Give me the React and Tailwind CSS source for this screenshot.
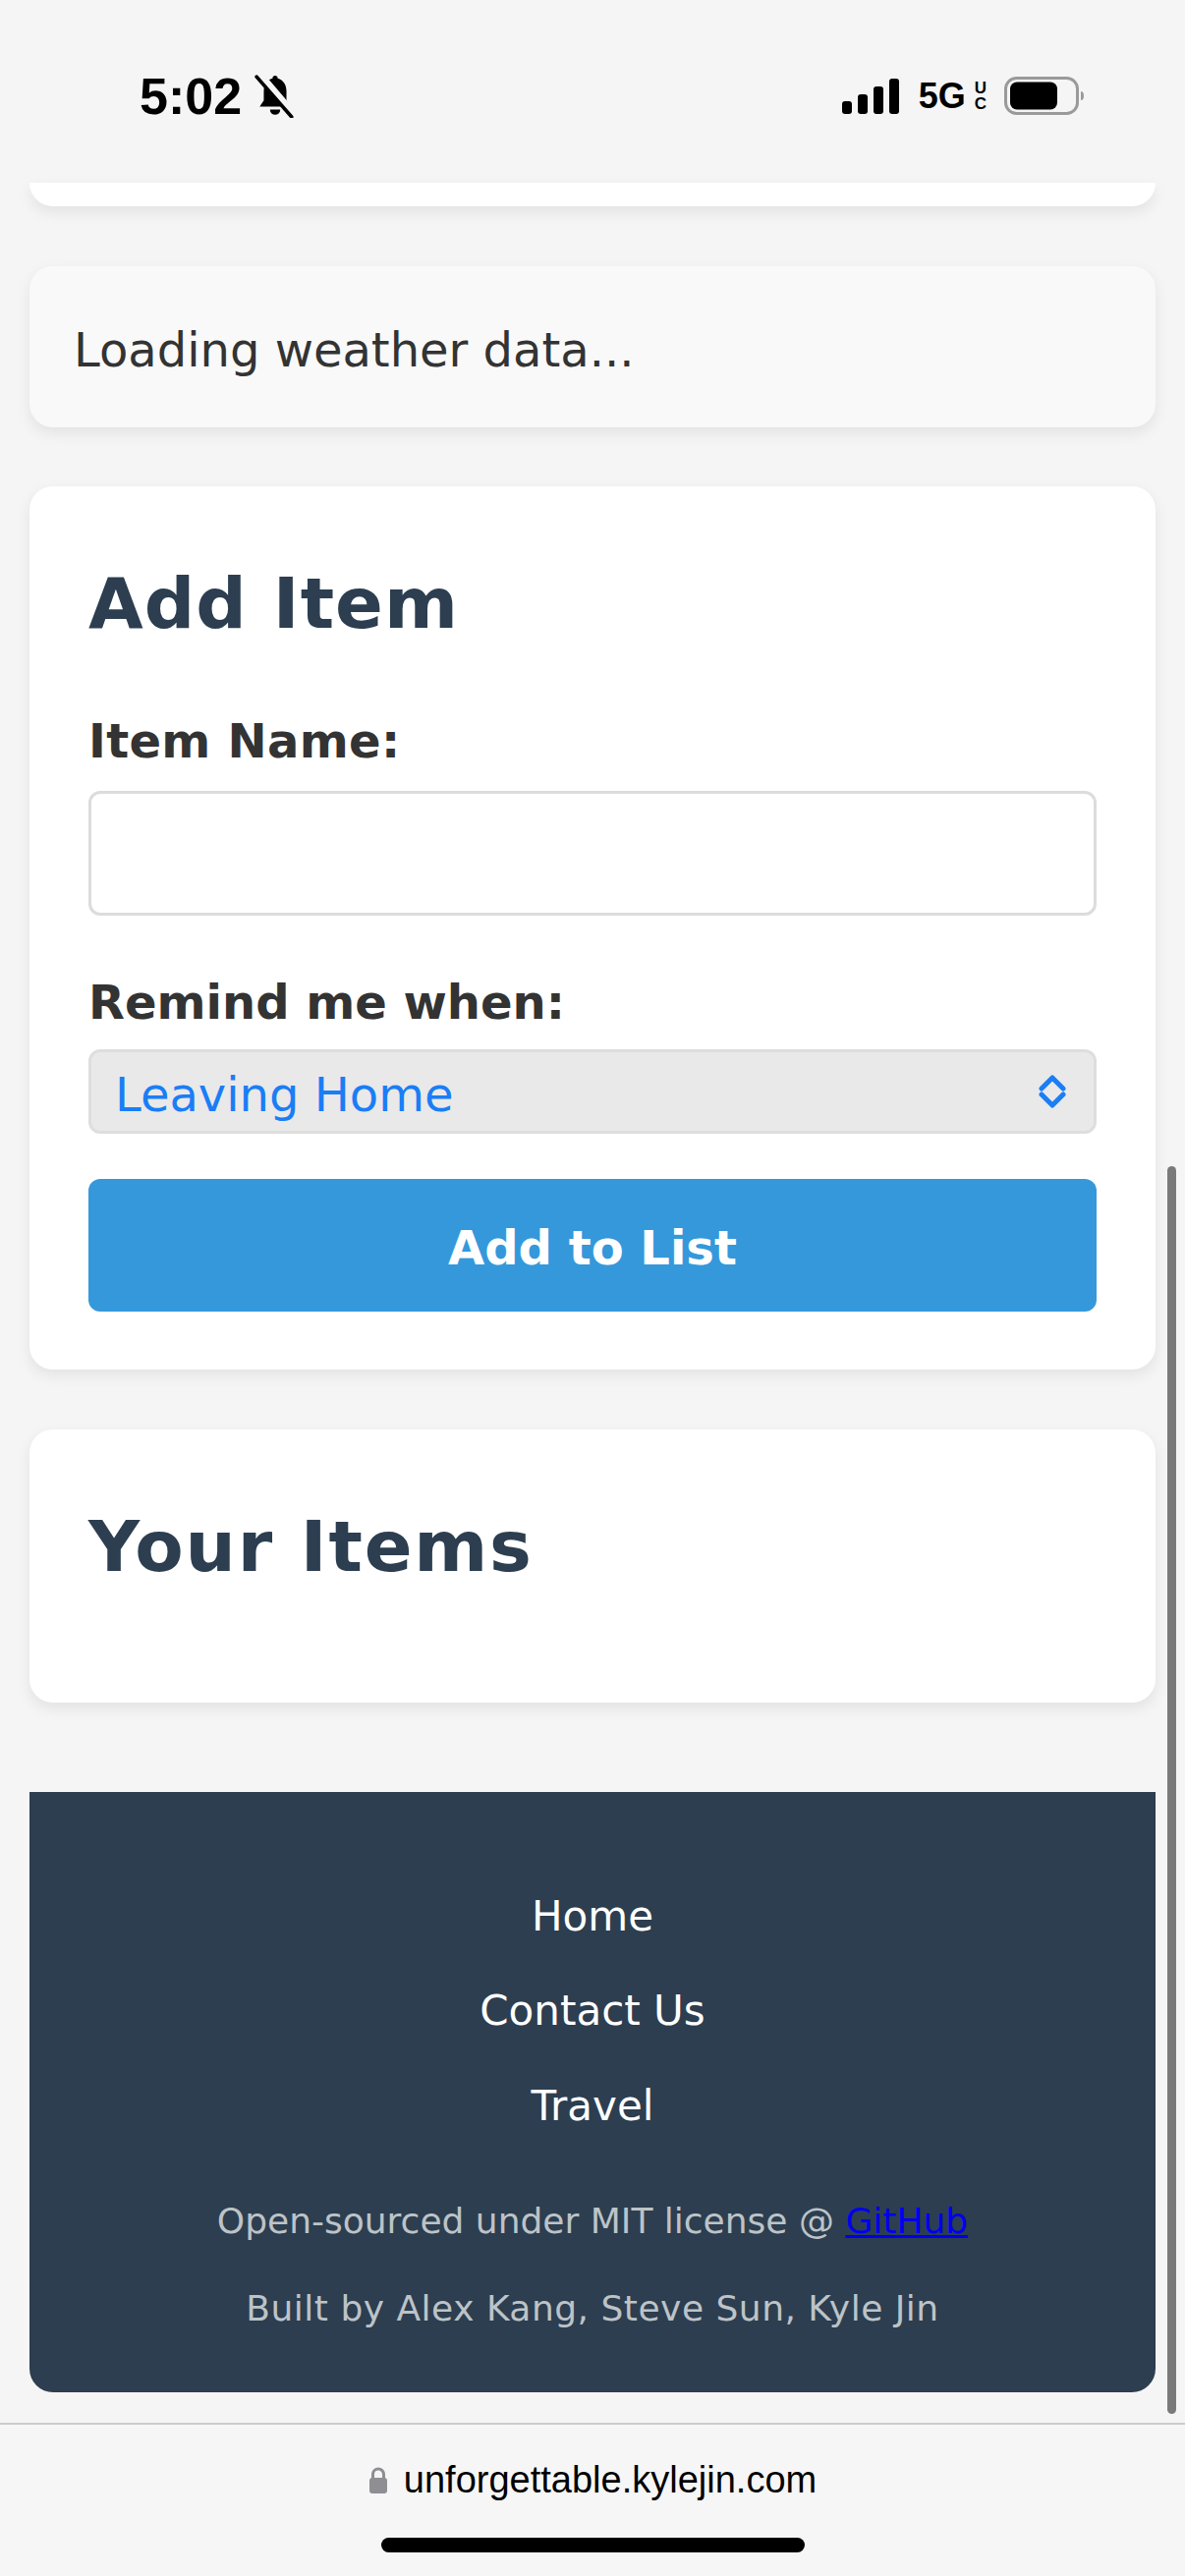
import React from "react";

const BellOff = () => (
  <svg width="42" height="44" viewBox="0 0 40 42" xmlns="http://www.w3.org/2000/svg">
    <path d="M20 1 C18.5 1 17.5 2 17.5 3.5 C12 5 9 10 9 16 L9 25 L5 31 L35 31 L31 25 L31 16 C31 10 28 5 22.5 3.5 C22.5 2 21.5 1 20 1 Z" fill="#000" />
    <path d="M15 34 A5 5 0 0 0 25 34 Z" fill="#000" />
    <line x1="6" y1="0" x2="40" y2="40" stroke="#f5f5f5" strokeWidth="6" />
    <line x1="2" y1="2" x2="36" y2="41" stroke="#000" strokeWidth="3.5" strokeLinecap="round" />
  </svg>
);

const Signal = () => (
  <svg width="58" height="36" viewBox="0 0 58 36" xmlns="http://www.w3.org/2000/svg">
    <rect x="0" y="23" width="10" height="13" rx="3" fill="#000" />
    <rect x="16" y="16" width="10" height="20" rx="3" fill="#000" />
    <rect x="32" y="8" width="10" height="28" rx="3" fill="#000" />
    <rect x="48" y="0" width="10" height="36" rx="3" fill="#000" />
  </svg>
);

const Battery = () => (
  <svg width="82" height="40" viewBox="0 0 82 40" xmlns="http://www.w3.org/2000/svg">
    <rect x="1.5" y="1.5" width="73" height="36" rx="11" fill="none" stroke="#9a9a9a" strokeWidth="3" />
    <rect x="6" y="5.5" width="48" height="28" rx="7" fill="#000" />
    <path d="M78 15 Q81 15 81 19.5 Q81 24 78 24 Z" fill="#9a9a9a" />
  </svg>
);

const Chevrons = () => (
  <svg width="28" height="36" viewBox="0 0 28 36" xmlns="http://www.w3.org/2000/svg">
    <path d="M3 15 L14 4 L25 15" fill="none" stroke="#1a7ef5" strokeWidth="5" strokeLinecap="round" strokeLinejoin="round" />
    <path d="M3 21 L14 32 L25 21" fill="none" stroke="#1a7ef5" strokeWidth="5" strokeLinecap="round" strokeLinejoin="round" />
  </svg>
);

const Lock = () => (
  <svg width="20" height="27" viewBox="0 0 20 27" xmlns="http://www.w3.org/2000/svg">
    <path d="M4.5 12 L4.5 7.5 A5.5 5.5 0 0 1 15.5 7.5 L15.5 12" fill="none" stroke="#8e8e93" strokeWidth="3" />
    <rect x="1" y="11" width="18" height="16" rx="3" fill="#8e8e93" />
  </svg>
);

export default function App() {
  return (
    <div className="relative w-full min-h-[2622px] overflow-hidden bg-[#f5f5f5] flex flex-col" style={{ fontFamily: '"DejaVu Sans", Verdana, sans-serif' }}>
      {/* Status bar */}
      <div className="h-[186px] flex flex-col">
        <div className="mt-[70px] h-[56px] flex items-center justify-between pl-[142px] pr-[102px]" style={{ fontFamily: '"Liberation Sans", Arial, sans-serif' }}>
          <div className="flex items-center gap-[13px]">
            <span className="text-[52px] leading-[52px] font-bold text-black">5:02</span>
            <BellOff />
          </div>
          <div className="flex items-center">
            <Signal />
            <span className="ml-[20px] text-[36px] leading-[40px] font-bold text-black">5G</span>
            <span className="ml-[9px] flex flex-col items-center text-[17px] leading-[16px] font-bold text-black">
              <span>U</span>
              <span>C</span>
            </span>
            <span className="ml-[18px] flex items-center">
              <Battery />
            </span>
          </div>
        </div>
      </div>

      <main className="px-[30px] flex flex-col">
        {/* previous card peeking out */}
        <div className="h-[24px] bg-white rounded-b-[24px] shadow-[0_6px_15px_rgba(0,0,0,0.08)]" />

        {/* Weather */}
        <div className="mt-[61px] h-[164px] bg-[#f9f9f9] rounded-[24px] pl-[45px] pt-[6px] flex items-center shadow-[0_6px_15px_rgba(0,0,0,0.08)]">
          <p className="text-[48px] leading-[56px] text-[#333]">Loading weather data...</p>
        </div>

        {/* Add Item */}
        <section className="mt-[60px] bg-white rounded-[24px] px-[60px] pt-[77px] pb-[59px] shadow-[0_6px_15px_rgba(0,0,0,0.08)] flex flex-col">
          <h2 className="text-[72px] leading-[84px] font-bold tracking-[1px] text-[#2c3e50]">Add Item</h2>
          <label className="mt-[70px] text-[48px] leading-[56px] font-bold tracking-[0.3px] text-[#333]">Item Name:</label>
          <input type="text" className="mt-[23px] h-[127px] w-full border-[3px] border-[#dcdcdc] rounded-[12px] bg-white px-[24px] text-[48px] outline-none" />
          <label className="mt-[60px] text-[48px] leading-[56px] font-bold text-[#333]">Remind me when:</label>
          <div className="mt-[20px] h-[86px] border-[3px] border-[#dedede] bg-[#e9e9ea] rounded-[12px] pl-[24px] pr-[28px] flex items-center justify-between">
            <span className="pt-[6px] text-[48px] leading-[56px] text-[#1a7ef5]">Leaving Home</span>
            <Chevrons />
          </div>
          <button className="mt-[46px] h-[135px] w-full bg-[#3498db] rounded-[12px] pt-[4px] text-[48px] leading-[56px] font-bold text-white">
            Add to List
          </button>
        </section>

        {/* Your Items */}
        <section className="mt-[61px] bg-white rounded-[24px] px-[60px] pt-[77px] pb-[117px] shadow-[0_6px_15px_rgba(0,0,0,0.08)]">
          <h2 className="text-[72px] leading-[84px] font-bold tracking-[1.8px] text-[#2c3e50]">Your Items</h2>
        </section>

        {/* Footer */}
        <footer className="mt-[91px] bg-[#2c3e50] rounded-b-[24px] pt-[102px] pb-[64px] flex flex-col items-center text-center">
          <a className="text-[42px] leading-[49px] text-white">Home</a>
          <a className="mt-[47px] text-[42px] leading-[49px] text-white">Contact Us</a>
          <a className="mt-[48px] text-[42px] leading-[49px] text-white">Travel</a>
          <p className="mt-[72px] text-[36px] leading-[42px] text-[#bdc3c7]">
            Open-sourced under MIT license @ <a className="text-[#0000ee] underline">GitHub</a>
          </p>
          <p className="mt-[47px] text-[36px] leading-[42px] tracking-[0.5px] text-[#bdc3c7]">Built by Alex Kang, Steve Sun, Kyle Jin</p>
        </footer>
      </main>

      {/* Safari bottom bar */}
      <div className="mt-[31px] flex-1 border-t-2 border-[#cbcbcb] bg-[#f6f6f6] pt-[34px] flex flex-col items-center" style={{ fontFamily: '"Liberation Sans", Arial, sans-serif' }}>
        <div className="flex items-center gap-[16px]">
          <Lock />
          <span className="text-[38px] leading-[44px] text-black">unforgettable.kylejin.com</span>
        </div>
        <div className="mt-[37px] w-[431px] h-[15px] rounded-full bg-black" />
      </div>

      {/* scroll indicator */}
      <div className="absolute right-[9px] top-[1187px] w-[9px] h-[1270px] rounded-full bg-[#7a7a7a]" />
    </div>
  );
}
